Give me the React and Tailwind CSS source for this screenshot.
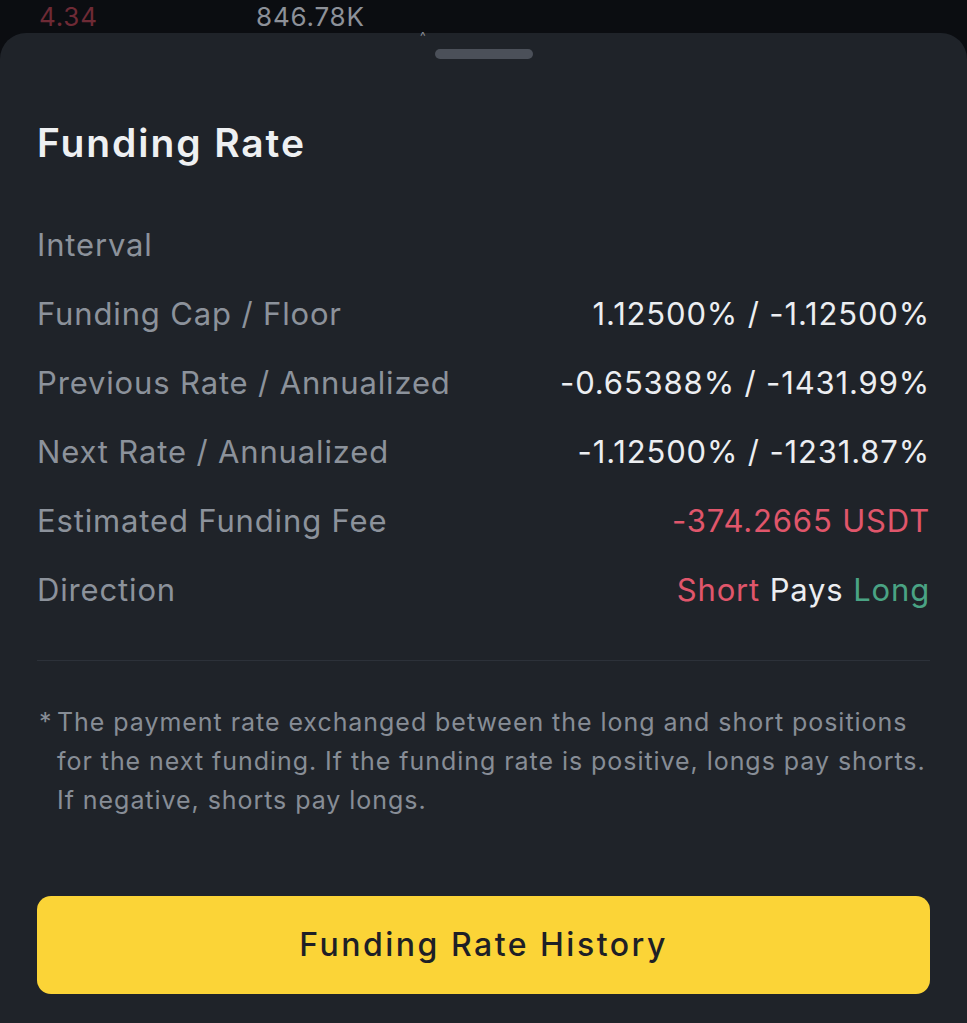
export default function App() {
  const rows = [
    { label: 'Interval', value: null },
    { label: 'Funding Cap / Floor', value: '1.12500% / -1.12500%' },
    { label: 'Previous Rate / Annualized', value: '-0.65388% / -1431.99%' },
    { label: 'Next Rate / Annualized', value: '-1.12500% / -1231.87%' },
  ];

  return (
    <div className="min-h-screen w-full bg-[#0b0d11] font-['Inter','Liberation_Sans',sans-serif] overflow-hidden">
      {/* market row behind the sheet */}
      <div className="h-[33px] relative">
        <span className="absolute left-[39px] top-[1px] text-[26px] leading-[32px] tracking-[0.8px] text-[#6e2a35]">4.34</span>
        <span className="absolute left-[256px] top-[1px] text-[26px] leading-[32px] tracking-[0.8px] text-[#8d9199]">846.78K</span>
      </div>

      <div className="relative bg-[#1f2329] rounded-t-[26px] px-[37px] pb-[27px] min-h-[990px]">
        <span className="absolute left-[420px] -top-[6px] text-[12px] text-[#8d9199]">^</span>
        <div className="pt-[16px] flex justify-center">
          <div className="w-[98px] h-[10px] rounded-full bg-[#4b5059]" />
        </div>

        <h1 className="mt-[60px] text-[39px] leading-[48px] font-semibold tracking-[1.9px] text-[#eef0f2]">Funding Rate</h1>

        <div className="mt-[44px] tracking-[0.85px]">
          {rows.map((r) => (
            <div key={r.label} className="h-[69px] flex items-center justify-between text-[31px]">
              <span className="text-[#8c929b]">{r.label}</span>
              {r.value && <span className="text-[#eceef1]">{r.value}</span>}
            </div>
          ))}
          <div className="h-[69px] flex items-center justify-between text-[31px]">
            <span className="text-[#8c929b]">Estimated Funding Fee</span>
            <span className="text-[#e0566b]">-374.2665 USDT</span>
          </div>
          <div className="h-[69px] flex items-center justify-between text-[31px]">
            <span className="text-[#8c929b]">Direction</span>
            <span>
              <span className="text-[#e0566b]">Short</span>
              <span className="text-[#eceef1]"> Pays </span>
              <span className="text-[#4aa384]">Long</span>
            </span>
          </div>
        </div>

        <div className="mt-[35px] h-px bg-[#2c3139]" />

        <div className="mt-[42px] flex text-[25px] leading-[39px] tracking-[0.95px] text-[#878d96]">
          <span className="w-[20px] shrink-0 pl-[2px]">*</span>
          <p>
            The payment rate exchanged between the long and short positions for the next funding. If the funding rate is positive, longs pay shorts. If negative, shorts pay longs.
          </p>
        </div>

        <button className="mt-[76px] w-full h-[98px] rounded-[14px] bg-[#fbd437] text-[#1e2026] text-[32px] font-medium tracking-[2.5px] flex items-center justify-center">
          Funding Rate History
        </button>
      </div>
    </div>
  );
}
